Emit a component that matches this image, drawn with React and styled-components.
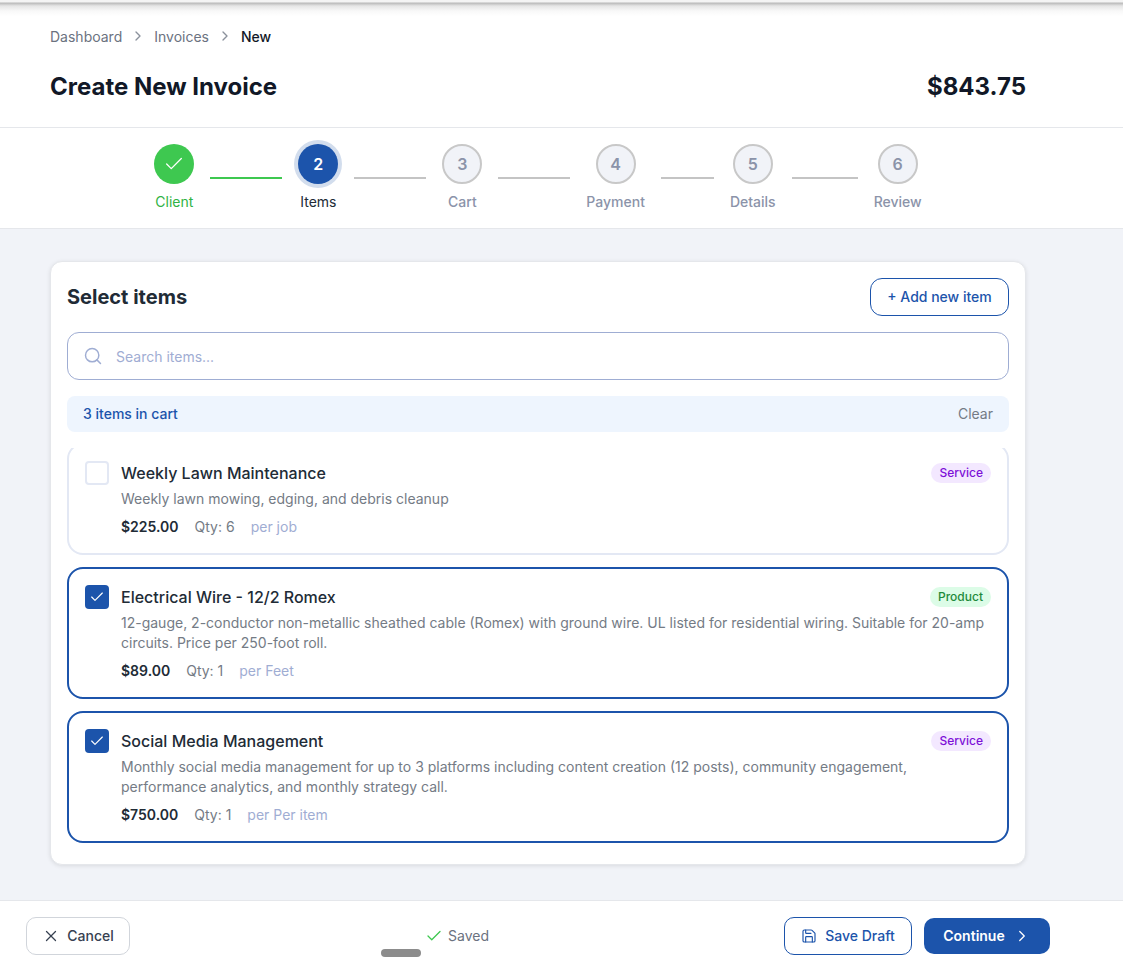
import React from "react";
import styled, { createGlobalStyle } from "styled-components";
import { Check, ChevronRight, Save, Search, X } from "lucide-react";

const GlobalStyle = createGlobalStyle`
  * {
    box-sizing: border-box;
  }
  body {
    margin: 0;
    background: #fff;
    font-family: Inter, "Liberation Sans", sans-serif;
    color: #111827;
  }
`;

const steps = [
  { label: "Client", state: "done" },
  { label: "Items", state: "active", line: 72 },
  { label: "Cart", line: 72 },
  { label: "Payment", line: 72 },
  { label: "Details", line: 53 },
  { label: "Review", line: 66 },
];

const items = [
  {
    name: "Weekly Lawn Maintenance",
    desc: "Weekly lawn mowing, edging, and debris cleanup",
    price: "$225.00",
    qty: 6,
    unit: "per job",
    type: "Service",
  },
  {
    name: "Electrical Wire - 12/2 Romex",
    desc: "12-gauge, 2-conductor non-metallic sheathed cable (Romex) with ground wire. UL listed for residential wiring. Suitable for 20-amp circuits. Price per 250-foot roll.",
    price: "$89.00",
    qty: 1,
    unit: "per Feet",
    type: "Product",
    selected: true,
  },
  {
    name: "Social Media Management",
    desc: "Monthly social media management for up to 3 platforms including content creation (12 posts), community engagement, performance analytics, and monthly strategy call.",
    price: "$750.00",
    qty: 1,
    unit: "per Per item",
    type: "Service",
    selected: true,
  },
];

const App = () => {
  return (
    <Page>
      <GlobalStyle />
      <TopShade />
      <Header>
        <Breadcrumb>
          <Crumb>Dashboard</Crumb>
          <ChevronRight size={16} color="#8b919c" />
          <Crumb>Invoices</Crumb>
          <ChevronRight size={16} color="#8b919c" />
          <Crumb $current>New</Crumb>
        </Breadcrumb>
        <TitleRow>
          <Title>Create New Invoice</Title>
          <Title>$843.75</Title>
        </TitleRow>
      </Header>

      <Stepper>
        {steps.map((step, i) => (
          <React.Fragment key={step.label}>
            {step.line && <Connector $width={step.line} $done={i === 1} />}
            <Step>
              <Circle $state={step.state}>
                {step.state === "done" ? <Check size={22} strokeWidth={1.4} /> : i + 1}
              </Circle>
              <StepLabel $state={step.state}>{step.label}</StepLabel>
            </Step>
          </React.Fragment>
        ))}
      </Stepper>

      <Main>
        <Card>
          <CardHead>
            <CardTitle>Select items</CardTitle>
            <AddButton>+ Add new item</AddButton>
          </CardHead>
          <SearchBox>
            <Search size={20} color="#9fadd3" strokeWidth={1.75} />
            <SearchInput placeholder="Search items..." readOnly />
          </SearchBox>
          <CartBar>
            <CartCount>3 items in cart</CartCount>
            <ClearText>Clear</ClearText>
          </CartBar>
          <ItemList>
            {items.map((item) => (
              <Item key={item.name} $selected={item.selected}>
                <Checkbox $selected={item.selected}>
                  {item.selected && <Check size={16} strokeWidth={1.75} />}
                </Checkbox>
                <ItemBody>
                  <ItemTop>
                    <ItemName>{item.name}</ItemName>
                    <Badge $type={item.type}>{item.type}</Badge>
                  </ItemTop>
                  <ItemDesc>{item.desc}</ItemDesc>
                  <ItemMeta>
                    <Price>{item.price}</Price>
                    <Qty>Qty: {item.qty}</Qty>
                    <Unit>{item.unit}</Unit>
                  </ItemMeta>
                </ItemBody>
              </Item>
            ))}
          </ItemList>
        </Card>
      </Main>

      <Footer>
        <CancelButton>
          <X size={18} strokeWidth={1.75} />
          <ButtonText>Cancel</ButtonText>
        </CancelButton>
        <Saved>
          <Check size={18} color="#3ec850" strokeWidth={1.75} />
          <ButtonText>Saved</ButtonText>
        </Saved>
        <FooterActions>
          <DraftButton>
            <Save size={16} strokeWidth={1.75} />
            <ButtonText>Save Draft</ButtonText>
          </DraftButton>
          <ContinueButton>
            <ButtonText>Continue</ButtonText>
            <ChevronRight size={18} strokeWidth={1.75} />
          </ContinueButton>
        </FooterActions>
        <HomeBar />
      </Footer>
    </Page>
  );
};

const Page = styled.div`
  position: relative;
  height: 968px;
  display: flex;
  flex-direction: column;
  overflow: hidden;
`;

const TopShade = styled.div`
  position: absolute;
  top: 0;
  left: 0;
  right: 0;
  height: 16px;
  background: linear-gradient(#f4f4f4 0, #f4f4f4 2px, #b9b9b9 3px, #e6e6e6 6px, #f8f8f8 11px, #fff 16px);
`;

const Header = styled.header`
  height: 128px;
  padding: 27px 97px 0 50px;
  border-bottom: 1px solid #e5e7eb;
`;

const Breadcrumb = styled.nav`
  display: flex;
  align-items: center;
  gap: 8px;
  height: 18px;
`;

const Crumb = styled.span`
  font-size: 14px;
  color: ${(p) => (p.$current ? "#111827" : "#6b7280")};
  font-weight: ${(p) => (p.$current ? 500 : 400)};
`;

const TitleRow = styled.div`
  display: flex;
  justify-content: space-between;
  align-items: center;
  margin-top: 26px;
`;

const Title = styled.h1`
  margin: 0;
  font-size: 24px;
  line-height: 32px;
  font-weight: 700;
  color: #111827;
`;

const Stepper = styled.div`
  height: 101px;
  padding: 16px 97px 0 50px;
  display: flex;
  justify-content: center;
  align-items: flex-start;
  gap: 16px;
  border-bottom: 1px solid #e5e7eb;
`;

const Step = styled.div`
  display: flex;
  flex-direction: column;
  align-items: center;
  min-width: 40px;
`;

const Circle = styled.div`
  width: 40px;
  height: 40px;
  border-radius: 50%;
  display: flex;
  align-items: center;
  justify-content: center;
  font-size: 16px;
  font-weight: 600;
  background: ${(p) =>
    p.$state === "done" ? "#3ec850" : p.$state === "active" ? "#1c54ab" : "#f1f3f8"};
  color: ${(p) => (p.$state ? "#fff" : "#8b93a9")};
  border: ${(p) => (p.$state ? "none" : "2px solid #c8c8c8")};
  box-shadow: ${(p) => (p.$state === "active" ? "0 0 0 4px #d2dded" : "none")};
`;

const StepLabel = styled.span`
  margin-top: 9px;
  font-size: 14px;
  line-height: 18px;
  white-space: nowrap;
  font-weight: ${(p) => (p.$state ? 400 : 500)};
  color: ${(p) =>
    p.$state === "done" ? "#2fb344" : p.$state === "active" ? "#212b36" : "#8b93a9"};
`;

const Connector = styled.div`
  width: ${(p) => p.$width}px;
  height: 2px;
  margin-top: 33px;
  background: ${(p) => (p.$done ? "#3ec850" : "#c4c4c4")};
`;

const Main = styled.main`
  flex: 1;
  padding: 32px 97px 0 50px;
  background: #f1f3f8;
`;

const Card = styled.section`
  padding: 16px;
  background: #fff;
  border: 1px solid #e5e7eb;
  border-radius: 12px;
  box-shadow: 0 1px 4px rgba(0, 0, 0, 0.1);
`;

const CardHead = styled.div`
  display: flex;
  justify-content: space-between;
  align-items: center;
  margin-bottom: 16px;
`;

const CardTitle = styled.h2`
  margin: 0;
  font-size: 20px;
  font-weight: 700;
  color: #212b36;
`;

const AddButton = styled.button`
  height: 38px;
  width: 139px;
  padding: 0 0 2px;
  background: #fff;
  border: 1px solid #1c54ab;
  border-radius: 12px;
  font: 500 14px Inter, sans-serif;
  color: #1c54ab;
`;

const SearchBox = styled.div`
  height: 48px;
  display: flex;
  align-items: center;
  gap: 13px;
  padding: 0 15px;
  margin-bottom: 16px;
  border: 1px solid #9fadd3;
  border-radius: 12px;
`;

const SearchInput = styled.input`
  flex: 1;
  border: none;
  outline: none;
  padding: 0;
  font: 400 14px Inter, sans-serif;
  &::placeholder {
    color: #9fadd3;
    opacity: 1;
  }
`;

const CartBar = styled.div`
  height: 36px;
  display: flex;
  justify-content: space-between;
  align-items: center;
  padding: 0 16px 2px;
  margin-bottom: 16px;
  background: #eef5fe;
  border-radius: 8px;
  font-size: 14px;
`;

const CartCount = styled.span`
  font-weight: 500;
  color: #1c54ab;
`;

const ClearText = styled.span`
  color: #747b85;
`;

// the list is scrolled a little, so the first row is cut off at the top
const ItemList = styled.div`
  height: 400px;
  overflow: hidden;
  display: flex;
  flex-direction: column;
  gap: 12px;
  & > :first-child {
    margin-top: -5px;
  }
`;

const Item = styled.article`
  flex-shrink: 0;
  display: flex;
  gap: 12px;
  padding: 16px;
  background: #fff;
  border: 2px solid ${(p) => (p.$selected ? "#1c54ab" : "#e3e8f4")};
  border-radius: 16px;
`;

const Checkbox = styled.div`
  flex-shrink: 0;
  width: 24px;
  height: 24px;
  display: flex;
  align-items: center;
  justify-content: center;
  border-radius: 4px;
  color: #fff;
  background: ${(p) => (p.$selected ? "#1c54ab" : "#fff")};
  border: ${(p) => (p.$selected ? "none" : "2px solid #e3e8f4")};
`;

const ItemBody = styled.div`
  flex: 1;
  min-width: 0;
`;

const ItemTop = styled.div`
  display: flex;
  justify-content: space-between;
  align-items: center;
  height: 24px;
`;

const ItemName = styled.span`
  font-size: 16px;
  font-weight: 500;
  color: #212b36;
`;

const Badge = styled.span`
  height: 20px;
  padding: 0 8px 2px;
  display: flex;
  align-items: center;
  border-radius: 10px;
  font-size: 12px;
  font-weight: 500;
  background: ${(p) => (p.$type === "Product" ? "#dcfce7" : "#f3e8ff")};
  color: ${(p) => (p.$type === "Product" ? "#1f8a3b" : "#7e10d8")};
`;

const ItemDesc = styled.p`
  margin: 4px 0 8px;
  font-size: 14px;
  line-height: 20px;
  color: #747b85;
`;

const ItemMeta = styled.div`
  display: flex;
  gap: 16px;
  font-size: 14px;
  line-height: 20px;
`;

const Price = styled.span`
  font-weight: 600;
  color: #212b36;
`;

const Qty = styled.span`
  color: #747b85;
`;

const Unit = styled.span`
  color: #9fadd3;
`;

const Footer = styled.footer`
  position: relative;
  height: 68px;
  padding: 16px 73px 0 26px;
  display: flex;
  justify-content: space-between;
  align-items: flex-start;
  background: #fff;
  border-top: 1px solid #e5e7eb;
`;

const ButtonText = styled.span`
  margin-bottom: 2px;
`;

const FooterButton = styled.button`
  height: 38px;
  display: flex;
  align-items: center;
  justify-content: center;
  gap: 8px;
  padding: 0;
  background: #fff;
  border-radius: 10px;
  font: 500 14px Inter, sans-serif;
`;

const CancelButton = styled(FooterButton)`
  width: 104px;
  gap: 7px;
  border: 1px solid #d1d5db;
  color: #374151;
`;

const Saved = styled.div`
  height: 38px;
  display: flex;
  align-items: center;
  gap: 5px;
  font-size: 14px;
  color: #6b7280;
`;

const FooterActions = styled.div`
  display: flex;
  align-items: center;
  gap: 12px;
`;

const DraftButton = styled(FooterButton)`
  width: 128px;
  border: 1px solid #1c54ab;
  color: #1c54ab;
`;

const ContinueButton = styled(FooterButton)`
  width: 126px;
  height: 36px;
  border: none;
  background: #1c54ab;
  color: #fff;
  font-weight: 600;
`;

const HomeBar = styled.div`
  position: absolute;
  left: 381px;
  top: 48px;
  width: 40px;
  height: 8px;
  border-radius: 4px;
  background: #8c8c8c;
`;

export default App;
